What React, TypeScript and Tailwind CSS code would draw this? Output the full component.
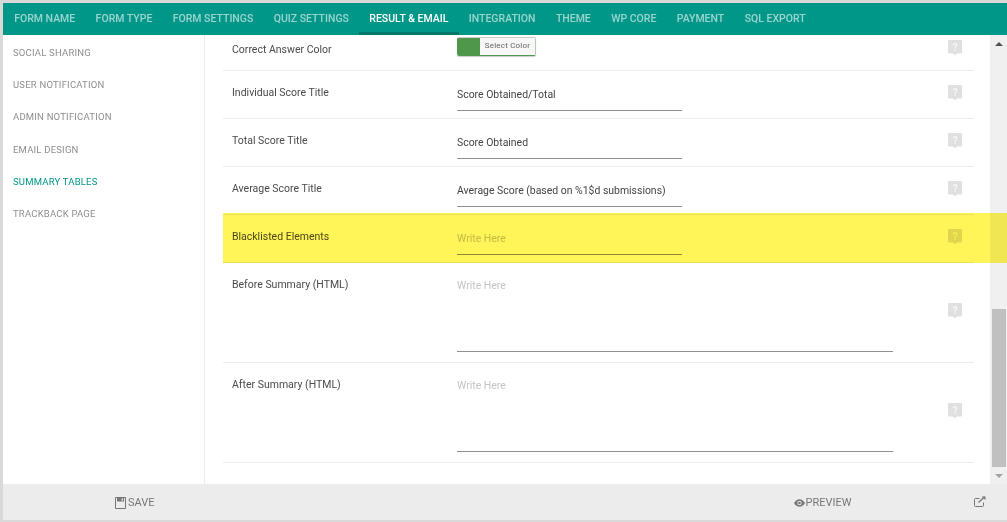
const tabs = ['FORM NAME', 'FORM TYPE', 'FORM SETTINGS', 'QUIZ SETTINGS', 'RESULT & EMAIL', 'INTEGRATION', 'THEME', 'WP CORE', 'PAYMENT', 'SQL EXPORT'];
const sideLinks = ['SOCIAL SHARING', 'USER NOTIFICATION', 'ADMIN NOTIFICATION', 'EMAIL DESIGN', 'SUMMARY TABLES', 'TRACKBACK PAGE'];

function HelpIcon() {
  return (
    <svg width="14" height="16" viewBox="0 0 14 16" className="shrink-0">
      <path d="M1 0h12a1 1 0 0 1 1 1v11.500a1 1 0 0 1-1 1H9L7 15.500 5 13.500H1a1 1 0 0 1-1-1V1a1 1 0 0 1 1-1z" fill="#000" fillOpacity="0.12" />
      <text x="7" y="10.500" textAnchor="middle" fontSize="10.500" fontWeight="700" fill="#fff" fillOpacity="0.75">?</text>
    </svg>
  );
}

function InputRow({ label, value, placeholder }: { label: string; value?: string; placeholder?: string }) {
  return (
    <div className="h-[48px] flex border-b border-[#ececec] pl-[9px] relative">
      <div className="w-[225px] pt-[15px] text-[10.500px] leading-[14px] text-[#4a4a4a]">{label}</div>
      <div className="w-[225px] h-[39px] mt-[1px] border-b border-[#8f8f8f] pt-[16px] text-[10.450px] leading-[14px] whitespace-nowrap">
        {value ? <span className="text-[#444]">{value}</span> : <span className="text-[#c4c4c4]">{placeholder}</span>}
      </div>
      <div className="absolute left-[725px] top-[14px]"><HelpIcon /></div>
    </div>
  );
}

function AreaRow({ label }: { label: string }) {
  return (
    <div className="h-[100px] flex border-b border-[#ececec] pl-[9px] relative">
      <div className="w-[225px] pt-[15px] text-[10.500px] leading-[14px] text-[#4a4a4a]">{label}</div>
      <div className="w-[436px] h-[89px] border-b border-[#8f8f8f] pt-[16px] text-[10.450px] leading-[14px] text-[#c4c4c4]">Write Here</div>
      <div className="absolute left-[725px] top-[40px]"><HelpIcon /></div>
    </div>
  );
}

export default function App() {
  return (
    <div className="w-[1007px] h-[522px] bg-[#d9d9d9] pt-[3px] pl-[3px] pb-[2px] font-['Roboto',sans-serif] overflow-hidden">
      <div className="w-[1004px] h-[517px] flex flex-col bg-white relative">
        {/* Tabs */}
        <div className="h-[32px] shrink-0 bg-[#009688] flex pl-[1px]">
          {tabs.map((tab) => (
            <div
              key={tab}
              className={
                tab === 'RESULT & EMAIL'
                  ? 'h-[32px] px-[10.200px] border-b-[3px] border-[#00796b] text-white font-medium text-[10.500px] leading-[31px] whitespace-nowrap'
                  : 'h-[32px] px-[10.200px] text-white/60 font-medium text-[10.500px] leading-[31px] whitespace-nowrap'
              }
            >
              {tab}
            </div>
          ))}
        </div>

        {/* Body */}
        <div className="flex-1 flex min-h-0">
          <div className="w-[202px] shrink-0 border-r border-[#ececec] pl-[10px] pt-[11px]">
            {sideLinks.map((link) => (
              <div
                key={link}
                className={
                  link === 'SUMMARY TABLES'
                    ? 'h-[32.200px] text-[9.500px] leading-[13px] tracking-[0.2px] text-[#009688]'
                    : 'h-[32.200px] text-[9.500px] leading-[13px] tracking-[0.2px] text-[#8e8e8e]'
                }
              >
                {link}
              </div>
            ))}
          </div>
          <div className="w-[18px] shrink-0" />
          <div className="w-[751px] shrink-0">
            <div className="h-[36px] flex border-b border-[#ececec] pl-[9px] relative">
              <div className="w-[225px] pt-[8px] text-[10.500px] leading-[14px] text-[#4a4a4a]">Correct Answer Color</div>
              <div className="w-[79px] h-[19px] mt-[2px] flex rounded-[2px] border border-[#4f9a4c] border-l-0 border-t-[#ccc] border-r-[#b5c9b4] shadow-[0_1px_1px_rgba(0,0,0,0.2)] overflow-hidden">
                <div className="w-[23px] bg-[#4f974a]" />
                <div className="flex-1 bg-[#f7f7f7] text-[8px] leading-[16px] text-center text-[#666] tracking-[0.2px]">Select Color</div>
              </div>
              <div className="absolute left-[725px] top-[5px]"><HelpIcon /></div>
            </div>
            <InputRow label="Individual Score Title" value="Score Obtained/Total" />
            <InputRow label="Total Score Title" value="Score Obtained" />
            <InputRow label="Average Score Title" value="Average Score (based on %1$d submissions)" />
            <InputRow label="Blacklisted Elements" placeholder="Write Here" />
            <AreaRow label="Before Summary (HTML)" />
            <AreaRow label="After Summary (HTML)" />
          </div>
          <div className="flex-1" />
          {/* Scrollbar */}
          <div className="w-[17px] shrink-0 bg-[#f0f0f0] flex flex-col items-center">
            <div className="h-[17px] flex items-center justify-center">
              <div className="w-0 h-0 border-x-[4px] border-x-transparent border-b-[4px] border-b-[#505050]" />
            </div>
            <div className="h-[257px] shrink-0" />
            <div className="w-[14px] h-[158px] shrink-0 bg-[#c0c0c0]" />
            <div className="flex-1 flex items-center justify-center">
              <div className="w-0 h-0 border-x-[4px] border-x-transparent border-t-[4px] border-t-[#a3a3a3]" />
            </div>
          </div>
        </div>

        {/* Footer */}
        <div className="h-[36px] shrink-0 bg-[#ececec] flex items-center text-[11px] text-[#777] pt-[2px]">
          <div className="ml-[112px] flex items-center gap-[2px]">
            <svg width="11" height="12" viewBox="0 0 11 12">
              <path d="M.5.500h10v11H.500z" fill="none" stroke="#777" />
              <path d="M2 1h7v3.500H2z" fill="#777" />
              <path d="M6.500 1.500h1.500v2H6.500z" fill="#ececec" />
            </svg>
            <span>SAVE</span>
          </div>
          <div className="ml-[639px] flex items-center gap-[1px]">
            <svg width="11" height="8" viewBox="0 0 11 8">
              <path d="M0 4c1.500-2.500 3.400-3.800 5.500-3.800S9.500 1.500 11 4C9.500 6.500 7.600 7.800 5.500 7.800S1.500 6.500 0 4z" fill="#777" />
              <circle cx="5.500" cy="4" r="2.200" fill="#ececec" />
              <circle cx="5.500" cy="4" r="1.300" fill="#777" />
            </svg>
            <span>PREVIEW</span>
          </div>
          <svg className="ml-[123px] -mt-[3px]" width="12" height="11" viewBox="0 0 12 11" fill="none" stroke="#777">
            <path d="M9.500 6.500v3a1 1 0 0 1-1 1h-7a1 1 0 0 1-1-1v-6a1 1 0 0 1 1-1h4" />
            <path d="M4.500 6.500L10.500 1" strokeWidth="1.300" />
            <path d="M7.500.500h4v3.500z" fill="#777" stroke="none" />
          </svg>
        </div>

        {/* Highlight over the row */}
        <div className="absolute left-[220px] top-[210px] w-[784px] h-[50px] bg-[#fff458] mix-blend-multiply pointer-events-none" />
      </div>
    </div>
  );
}
